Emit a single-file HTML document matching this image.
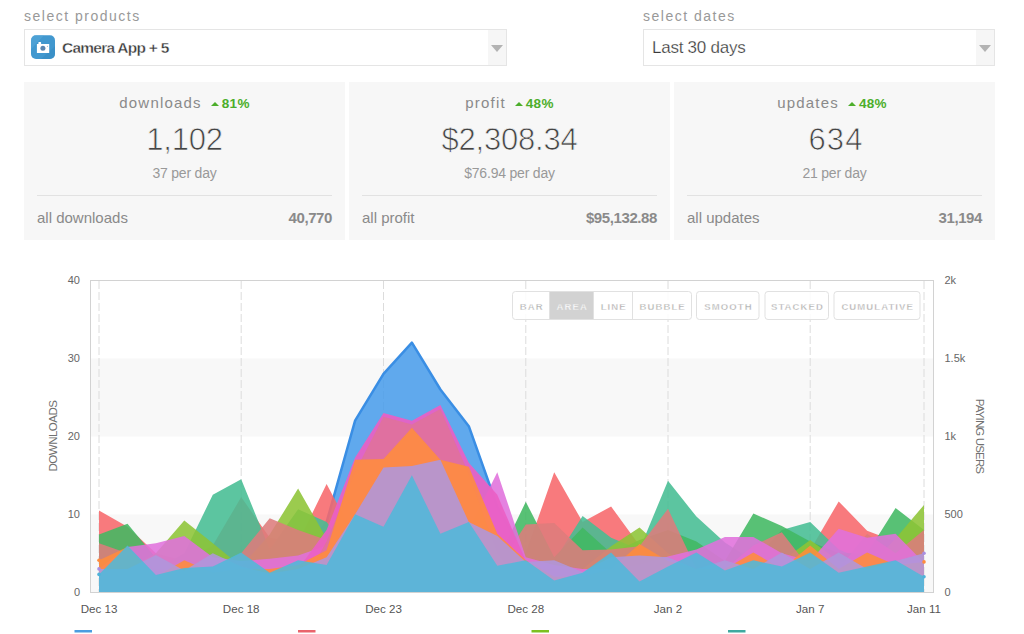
<!DOCTYPE html>
<html>
<head>
<meta charset="utf-8">
<title>Dashboard</title>
<style>
*{box-sizing:border-box;margin:0;padding:0}
html,body{width:1024px;height:634px;overflow:hidden;background:#fff}
body{font-family:"Liberation Sans",sans-serif;color:#444;position:relative}
.abs{position:absolute;white-space:nowrap}
.lbl{font-size:14px;letter-spacing:1.5px;color:#999;line-height:16px}
.sel{position:absolute;top:29px;height:37px;border:1px solid #e5e5e5;background:#fff}
.sel .arr{position:absolute;right:0;top:0;bottom:0;width:18px;background:#f6f6f6}
.sel .arr:after{content:"";position:absolute;left:3px;top:15px;border-left:6px solid transparent;border-right:6px solid transparent;border-top:7px solid #b3b3b3}
.card{position:absolute;top:82px;height:158px;width:321px;background:#f7f7f7}
.card .t{position:absolute;top:93px;left:0;right:0;text-align:center;font-size:15px;letter-spacing:1.2px;color:#8a8a8a;line-height:18px;white-space:nowrap}
.card .t b{color:#4cae2b;font-size:13.5px;letter-spacing:.3px;margin-left:9px}
.card .t i{display:inline-block;width:0;height:0;border-left:4px solid transparent;border-right:4px solid transparent;border-bottom:4px solid #4cae2b;margin-right:3px;position:relative;top:-2px}
.card .n{position:absolute;top:120px;left:0;right:0;text-align:center;font-size:31px;letter-spacing:-.2px;color:#444;line-height:36px;white-space:nowrap;-webkit-text-stroke:.75px #f7f7f7}
.card .d{position:absolute;top:163px;left:0;right:0;text-align:center;font-size:14px;color:#999;line-height:18px;letter-spacing:-.2px}
.card .hr{position:absolute;left:13px;right:13px;top:113px;height:1px;background:#e2e2e2}
.card .al{position:absolute;left:13px;top:127px;font-size:15px;color:#8a8a8a;line-height:18px}
.card .ar{position:absolute;right:13px;top:127px;font-size:15px;color:#8a8a8a;font-weight:bold;line-height:18px;letter-spacing:-.4px}
.card .t,.card .n,.card .d{top:auto}
</style>
</head>
<body>
<!-- header -->
<div class="abs lbl" style="left:24px;top:7.5px">select products</div>
<div class="sel" style="left:24px;width:483px">
  <svg class="abs" style="left:6px;top:5px" width="24" height="25" viewBox="0 -0.300 24 25">
    <rect x="0" y="0" width="24" height="23.700" rx="5" fill="#4198cf"/>
    <path d="M0 5a5 5 0 0 1 5-5h8L0 14z" fill="#58aadb" opacity=".55"/>
    <path d="M24 11v7.700a5 5 0 0 1-5 5h-9z" fill="#3487c0" opacity=".5"/>
    <path d="M5.900 8.800h1.500v-1.600q0-.6.600-.6h1.500q.6 0 .6.600v1.600h8.100v8.800H5.900z" fill="#fff"/>
    <circle cx="11.900" cy="12.900" r="2.500" fill="#5b86b0"/>
    <circle cx="16.400" cy="10.900" r=".55" fill="#7fa6c8"/>
  </svg>
  <div class="abs" style="left:37px;top:8px;font-size:15.5px;font-weight:bold;color:#383838;line-height:20px;letter-spacing:-.75px;-webkit-text-stroke:.35px #fff">Camera App + 5</div>
  <div class="arr"></div>
</div>
<div class="abs lbl" style="left:643px;top:7.5px">select dates</div>
<div class="sel" style="left:643px;width:352px">
  <div class="abs" style="left:8px;top:8px;font-size:17px;color:#3a3a3a;line-height:20px;letter-spacing:-.25px;-webkit-text-stroke:.25px #fff">Last 30 days</div>
  <div class="arr"></div>
</div>

<!-- cards -->
<div class="card" style="left:24px">
  <div class="t" style="top:11.700px">downloads<b><i></i>81%</b></div>
  <div class="n" style="top:40.300px">1,102</div>
  <div class="d" style="top:82px">37 per day</div>
  <div class="hr"></div>
  <div class="al">all downloads</div><div class="ar">40,770</div>
</div>
<div class="card" style="left:349px">
  <div class="t" style="top:11.700px">profit<b><i></i>48%</b></div>
  <div class="n" style="top:40.300px">$2,308.34</div>
  <div class="d" style="top:82px">$76.94 per day</div>
  <div class="hr"></div>
  <div class="al">all profit</div><div class="ar">$95,132.88</div>
</div>
<div class="card" style="left:674px">
  <div class="t" style="top:11.700px;padding-right:5px">updates<b><i></i>48%</b></div>
  <div class="n" style="top:40.300px;letter-spacing:1.100px;padding-left:3px">634</div>
  <div class="d" style="top:82px">21 per day</div>
  <div class="hr"></div>
  <div class="al">all updates</div><div class="ar">31,194</div>
</div>

<!-- chart -->
<svg class="abs" style="left:0;top:250px" width="1024" height="384" viewBox="0 250 1024 384">
<!--CHART-->
<rect x="91" y="358.5" width="843" height="78" fill="#f8f8f8"/>
<rect x="91" y="514.5" width="843" height="78" fill="#f8f8f8"/>
<line x1="99.0" y1="281" x2="99.0" y2="592" stroke="#dcdcdc" stroke-width="1" stroke-dasharray="8,3"/>
<line x1="241.2" y1="281" x2="241.2" y2="592" stroke="#dcdcdc" stroke-width="1" stroke-dasharray="8,3"/>
<line x1="383.5" y1="281" x2="383.5" y2="592" stroke="#dcdcdc" stroke-width="1" stroke-dasharray="8,3"/>
<line x1="525.8" y1="281" x2="525.8" y2="592" stroke="#dcdcdc" stroke-width="1" stroke-dasharray="8,3"/>
<line x1="668.0" y1="281" x2="668.0" y2="592" stroke="#dcdcdc" stroke-width="1" stroke-dasharray="8,3"/>
<line x1="810.2" y1="281" x2="810.2" y2="592" stroke="#dcdcdc" stroke-width="1" stroke-dasharray="8,3"/>
<line x1="924.0" y1="281" x2="924.0" y2="592" stroke="#dcdcdc" stroke-width="1" stroke-dasharray="8,3"/>
<g>
<polygon points="99.0,592.3 99.0,576.7 127.5,576.7 155.9,576.7 184.3,568.9 212.8,568.9 241.2,568.9 269.7,568.9 298.1,561.1 326.6,522.1 355.1,420.7 383.5,373.9 411.9,342.7 440.4,389.5 468.8,426.2 497.3,506.5 525.8,558.0 554.2,576.7 582.6,576.7 611.1,580.6 639.5,584.5 668.0,576.7 696.4,576.7 724.9,576.7 753.4,576.7 781.8,576.7 810.2,576.7 838.7,576.7 867.1,576.7 895.6,576.7 924.0,576.7 924.0,592.3" fill="#4a9deb" fill-opacity="0.88"/>
<polyline points="99.0,576.7 127.5,576.7 155.9,576.7 184.3,568.9 212.8,568.9 241.2,568.9 269.7,568.9 298.1,561.1 326.6,522.1 355.1,420.7 383.5,373.9 411.9,342.7 440.4,389.5 468.8,426.2 497.3,506.5 525.8,558.0 554.2,576.7 582.6,576.7 611.1,580.6 639.5,584.5 668.0,576.7 696.4,576.7 724.9,576.7 753.4,576.7 781.8,576.7 810.2,576.7 838.7,576.7 867.1,576.7 895.6,576.7 924.0,576.7" fill="none" stroke="#3a8ee4" stroke-width="2.5" stroke-linejoin="round"/>
<polygon points="99.0,592.3 99.0,510.4 127.5,526.8 155.9,553.3 184.3,561.1 212.8,545.5 241.2,497.1 269.7,537.7 298.1,542.4 326.6,483.9 355.1,537.7 383.5,553.3 411.9,553.3 440.4,553.3 468.8,553.3 497.3,553.3 525.8,553.3 554.2,472.2 582.6,522.1 611.1,506.5 639.5,545.5 668.0,553.3 696.4,561.1 724.9,561.1 753.4,553.3 781.8,553.3 810.2,550.2 838.7,501.4 867.1,530.7 895.6,541.6 924.0,553.3 924.0,592.3" fill="#f7686b" fill-opacity="0.88"/>
<polygon points="99.0,592.3 99.0,568.9 127.5,568.9 155.9,568.9 184.3,553.3 212.8,494.8 241.2,479.2 269.7,549.4 298.1,509.2 326.6,522.1 355.1,561.1 383.5,568.9 411.9,568.9 440.4,568.9 468.8,568.9 497.3,568.9 525.8,568.9 554.2,561.1 582.6,515.9 611.1,537.7 639.5,549.4 668.0,480.8 696.4,516.6 724.9,542.4 753.4,561.1 781.8,529.9 810.2,522.1 838.7,549.4 867.1,561.1 895.6,561.1 924.0,561.1 924.0,592.3" fill="#46bd93" fill-opacity="0.88"/>
<polygon points="99.0,592.3 99.0,534.6 127.5,523.7 155.9,558.0 184.3,568.9 212.8,568.9 241.2,568.9 269.7,568.9 298.1,568.9 326.6,568.9 355.1,568.9 383.5,568.9 411.9,568.9 440.4,568.9 468.8,568.9 497.3,561.1 525.8,501.8 554.2,557.2 582.6,527.6 611.1,553.3 639.5,540.0 668.0,529.9 696.4,541.6 724.9,561.1 753.4,513.5 781.8,526.0 810.2,541.6 838.7,553.3 867.1,553.3 895.6,508.1 924.0,529.9 924.0,592.3" fill="#41b862" fill-opacity="0.88"/>
<polygon points="99.0,592.3 99.0,568.9 127.5,568.9 155.9,553.3 184.3,520.5 212.8,543.2 241.2,566.6 269.7,534.6 298.1,488.6 326.6,538.5 355.1,568.9 383.5,568.9 411.9,568.9 440.4,568.9 468.8,568.9 497.3,568.9 525.8,568.9 554.2,568.9 582.6,568.9 611.1,546.3 639.5,527.6 668.0,553.3 696.4,568.9 724.9,568.9 753.4,568.9 781.8,561.1 810.2,540.0 838.7,561.1 867.1,568.9 895.6,538.5 924.0,504.9 924.0,592.3" fill="#8dc436" fill-opacity="0.88"/>
<polygon points="99.0,592.3 99.0,543.2 127.5,553.3 155.9,568.9 184.3,568.9 212.8,568.9 241.2,553.3 269.7,518.2 298.1,529.9 326.6,540.0 355.1,553.3 383.5,568.9 411.9,568.9 440.4,568.9 468.8,568.9 497.3,568.9 525.8,524.4 554.2,522.9 582.6,550.2 611.1,549.4 639.5,546.3 668.0,508.8 696.4,568.9 724.9,568.9 753.4,545.5 781.8,532.2 810.2,568.9 838.7,568.9 867.1,533.8 895.6,553.3 924.0,529.9 924.0,592.3" fill="#dd7c7c" fill-opacity="0.88"/>
<polygon points="99.0,592.3 99.0,568.9 127.5,547.1 155.9,543.2 184.3,536.1 212.8,557.2 241.2,561.1 269.7,558.8 298.1,555.6 326.6,545.5 355.1,529.9 383.5,553.3 411.9,553.3 440.4,553.3 468.8,529.9 497.3,472.2 525.8,557.2 554.2,565.0 582.6,568.9 611.1,568.9 639.5,565.0 668.0,556.4 696.4,549.4 724.9,536.9 753.4,536.9 781.8,553.3 810.2,561.1 838.7,528.7 867.1,537.7 895.6,533.8 924.0,562.7 924.0,592.3" fill="#e071dc" fill-opacity="0.88"/>
<polygon points="99.0,592.3 99.0,592.3 127.5,592.3 155.9,592.3 184.3,592.3 212.8,592.3 241.2,592.3 269.7,592.3 298.1,568.9 326.6,529.9 355.1,457.4 383.5,412.9 411.9,420.7 440.4,405.1 468.8,462.8 497.3,494.8 525.8,561.1 554.2,592.3 582.6,592.3 611.1,592.3 639.5,592.3 668.0,592.3 696.4,592.3 724.9,592.3 753.4,592.3 781.8,592.3 810.2,592.3 838.7,592.3 867.1,592.3 895.6,592.3 924.0,592.3 924.0,592.3" fill="#ea5fc4" fill-opacity="0.92"/>
<polygon points="99.0,592.3 99.0,592.3 127.5,592.3 155.9,592.3 184.3,592.3 212.8,592.3 241.2,592.3 269.7,592.3 298.1,592.3 326.6,541.6 355.1,471.4 383.5,416.8 411.9,424.6 440.4,409.0 468.8,473.7 497.3,553.3 525.8,592.3 554.2,592.3 582.6,592.3 611.1,592.3 639.5,592.3 668.0,592.3 696.4,592.3 724.9,592.3 753.4,592.3 781.8,592.3 810.2,592.3 838.7,592.3 867.1,592.3 895.6,592.3 924.0,592.3 924.0,592.3" fill="#e0729a" fill-opacity="0.88"/>
<polygon points="99.0,592.3 99.0,560.3 127.5,547.1 155.9,576.7 184.3,560.3 212.8,572.8 241.2,568.9 269.7,568.9 298.1,565.0 326.6,550.2 355.1,459.7 383.5,458.9 411.9,427.7 440.4,459.7 468.8,466.7 497.3,533.8 525.8,560.3 554.2,576.7 582.6,576.7 611.1,568.9 639.5,543.9 668.0,561.1 696.4,568.9 724.9,568.9 753.4,552.5 781.8,568.9 810.2,545.5 838.7,568.9 867.1,552.5 895.6,565.0 924.0,561.9 924.0,592.3" fill="#ff8c3c" fill-opacity="0.88"/>
<polygon points="99.0,592.3 99.0,568.9 127.5,568.9 155.9,554.9 184.3,570.5 212.8,553.3 241.2,566.6 269.7,573.6 298.1,568.9 326.6,557.2 355.1,514.3 383.5,467.5 411.9,465.9 440.4,459.7 468.8,522.1 497.3,536.1 525.8,561.9 554.2,560.3 582.6,572.0 611.1,557.2 639.5,555.6 668.0,557.2 696.4,568.9 724.9,560.3 753.4,568.9 781.8,552.5 810.2,568.9 838.7,552.5 867.1,568.9 895.6,561.1 924.0,553.3 924.0,592.3" fill="#af96dc" fill-opacity="0.88"/>
<polygon points="99.0,592.3 99.0,574.4 127.5,545.5 155.9,575.1 184.3,568.1 212.8,566.6 241.2,552.5 269.7,572.8 298.1,560.3 326.6,565.0 355.1,514.3 383.5,526.8 411.9,475.3 440.4,533.8 468.8,522.1 497.3,565.8 525.8,560.3 554.2,580.6 582.6,572.8 611.1,552.5 639.5,581.4 668.0,566.6 696.4,552.5 724.9,570.5 753.4,560.3 781.8,566.6 810.2,552.5 838.7,572.8 867.1,566.6 895.6,560.3 924.0,576.7 924.0,592.3" fill="#50b8d9" fill-opacity="0.88"/>
</g>
<circle cx="924.0" cy="553.3" r="1.8" fill="#a98fe0"/>
<circle cx="924.0" cy="561.9" r="1.8" fill="#ff8c3c"/>
<circle cx="924.0" cy="576.7" r="1.8" fill="#4fb3d9"/>
<circle cx="99.0" cy="560.3" r="1.8" fill="#ff8c3c"/>
<circle cx="99.0" cy="568.9" r="1.8" fill="#a98fe0"/>
<circle cx="99.0" cy="574.4" r="1.8" fill="#4fb3d9"/>
<rect x="90.5" y="280.5" width="843" height="312" fill="none" stroke="#d2d2d2" stroke-width="1"/>
<text x="80" y="284.3" text-anchor="end" font-size="11" fill="#666" font-family="Liberation Sans, sans-serif">40</text>
<text x="80" y="362.3" text-anchor="end" font-size="11" fill="#666" font-family="Liberation Sans, sans-serif">30</text>
<text x="80" y="440.3" text-anchor="end" font-size="11" fill="#666" font-family="Liberation Sans, sans-serif">20</text>
<text x="80" y="518.3" text-anchor="end" font-size="11" fill="#666" font-family="Liberation Sans, sans-serif">10</text>
<text x="80" y="596.3" text-anchor="end" font-size="11" fill="#666" font-family="Liberation Sans, sans-serif">0</text>
<text x="944.5" y="284.3" text-anchor="start" font-size="11" fill="#666" font-family="Liberation Sans, sans-serif">2k</text>
<text x="944.5" y="362.3" text-anchor="start" font-size="11" fill="#666" font-family="Liberation Sans, sans-serif">1.5k</text>
<text x="944.5" y="440.3" text-anchor="start" font-size="11" fill="#666" font-family="Liberation Sans, sans-serif">1k</text>
<text x="944.5" y="518.3" text-anchor="start" font-size="11" fill="#666" font-family="Liberation Sans, sans-serif">500</text>
<text x="944.5" y="596.3" text-anchor="start" font-size="11" fill="#666" font-family="Liberation Sans, sans-serif">0</text>
<text transform="translate(57.2,436) rotate(-90)" text-anchor="middle" font-size="11.5" letter-spacing="-0.5" fill="#707070" font-family="Liberation Sans, sans-serif">DOWNLOADS</text>
<text transform="translate(976,436) rotate(90)" text-anchor="middle" font-size="11.5" letter-spacing="-0.85" fill="#707070" font-family="Liberation Sans, sans-serif">PAYING USERS</text>
<text x="99.0" y="612.7" text-anchor="middle" font-size="11.6" fill="#555" font-family="Liberation Sans, sans-serif">Dec 13</text>
<text x="241.2" y="612.7" text-anchor="middle" font-size="11.6" fill="#555" font-family="Liberation Sans, sans-serif">Dec 18</text>
<text x="383.5" y="612.7" text-anchor="middle" font-size="11.6" fill="#555" font-family="Liberation Sans, sans-serif">Dec 23</text>
<text x="525.8" y="612.7" text-anchor="middle" font-size="11.6" fill="#555" font-family="Liberation Sans, sans-serif">Dec 28</text>
<text x="668.0" y="612.7" text-anchor="middle" font-size="11.6" fill="#555" font-family="Liberation Sans, sans-serif">Jan 2</text>
<text x="810.2" y="612.7" text-anchor="middle" font-size="11.6" fill="#555" font-family="Liberation Sans, sans-serif">Jan 7</text>
<text x="924.0" y="612.7" text-anchor="middle" font-size="11.6" fill="#555" font-family="Liberation Sans, sans-serif">Jan 11</text>
<rect x="74.5" y="630" width="17.5" height="2.5" fill="#4a9de0"/>
<rect x="298" y="630" width="17.5" height="2.5" fill="#e9646c"/>
<rect x="531.5" y="630" width="17.5" height="2.5" fill="#7cc120"/>
<rect x="728" y="630" width="17.5" height="2.5" fill="#3fa9a0"/>
<g font-size="9.5" font-weight="bold" letter-spacing="1.1" text-anchor="middle" font-family="Liberation Sans, sans-serif">
<rect x="512.5" y="291.5" width="179" height="28" rx="3" fill="#fff" fill-opacity=".85" stroke="#e1e1e1"/>
<rect x="549.5" y="292" width="44" height="27" fill="#d2d2d2"/>
<path d="M549.5 292v27M593.5 292v27M632.5 292v27" stroke="#e1e1e1" fill="none"/>
<text x="531.7" y="309.9" fill="#aaa" stroke="#fff" stroke-width=".35">BAR</text>
<text x="572.2" y="309.9" fill="#fff" stroke="#d2d2d2" stroke-width=".35">AREA</text>
<text x="613.7" y="309.9" fill="#aaa" stroke="#fff" stroke-width=".35">LINE</text>
<text x="662.7" y="309.9" fill="#aaa" stroke="#fff" stroke-width=".35">BUBBLE</text>
<rect x="696.5" y="291.5" width="62.5" height="28" rx="3" fill="#fff" fill-opacity=".85" stroke="#e1e1e1"/>
<text x="728.45" y="309.9" fill="#aaa" stroke="#fff" stroke-width=".35">SMOOTH</text>
<rect x="765.0" y="291.5" width="63.5" height="28" rx="3" fill="#fff" fill-opacity=".85" stroke="#e1e1e1"/>
<text x="797.45" y="309.9" fill="#aaa" stroke="#fff" stroke-width=".35">STACKED</text>
<rect x="834.0" y="291.5" width="86.0" height="28" rx="3" fill="#fff" fill-opacity=".85" stroke="#e1e1e1"/>
<text x="877.7" y="309.9" fill="#aaa" stroke="#fff" stroke-width=".35">CUMULATIVE</text>
</g>
<!--/CHART-->
</svg>
</body>
</html>
